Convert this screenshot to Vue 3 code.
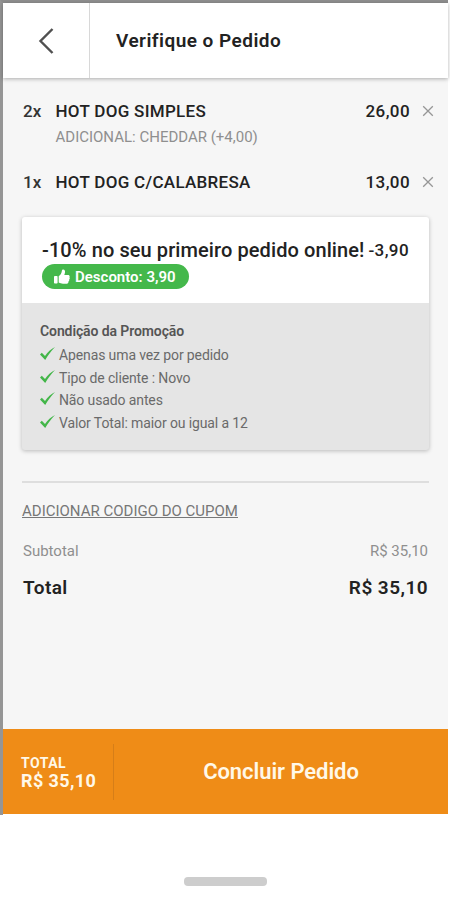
<template>
  <div class="screen">
    <div class="app">
      <header class="header">
        <button type="button" class="back" aria-label="Voltar">
          <svg width="16" height="26" viewBox="0 0 16 26">
            <path d="M14.500 1L2.500 13l12 12" fill="none" stroke="#505050" stroke-width="2.400" />
          </svg>
        </button>
        <h1>Verifique o Pedido</h1>
      </header>

      <main class="content">
        <ul class="items">
          <li v-for="item in items" :key="item.name" class="item">
            <span class="qty">{{ item.qty }}x</span>
            <div class="item-info">
              <span class="item-name">{{ item.name }}</span>
              <span v-if="item.extra" class="item-extra">{{ item.extra }}</span>
            </div>
            <span class="item-price">{{ item.price }}</span>
            <button type="button" class="remove" aria-label="Remover">
              <svg width="12" height="12" viewBox="0 0 12 12">
                <path d="M1.2 1.2l9.6 9.6M10.8 1.2L1.2 10.8" stroke="#969696" stroke-width="1.3" />
              </svg>
            </button>
          </li>
        </ul>

        <section class="promo">
          <div class="promo-top">
            <div class="promo-row">
              <span class="promo-title">-10% no seu primeiro pedido online!</span>
              <span class="promo-value">-3,90</span>
            </div>
            <span class="badge">
              <svg width="16" height="16" viewBox="0 0 16 16" fill="#fff">
                <rect x="0" y="7" width="3.6" height="7.5" rx="0.8" />
                <path
                  d="M4.7 7.2C6.3 6.1 7.5 4.5 7.8 2.2 7.9 1 8.5.5 9.3.6c1.6.2 2 1.800 1.600 3.300L10.300 6h3.800c1.300 0 2 1.300 1.300 2.300.6.7.4 1.800-.3 2.200.4.8 0 1.700-.7 2 .2 1.500-.7 2.200-2.200 2.200H9c-1.700 0-2.700-.6-4.300-1.200z"
                />
              </svg>
              <span>Desconto: 3,90</span>
            </span>
          </div>
          <div class="promo-rules">
            <h2>Condição da Promoção</h2>
            <ul>
              <li v-for="rule in rules" :key="rule">
                <svg width="15" height="14" viewBox="0 0 15 14">
                  <path d="M0 7.600L1.800 5.800 5 9C7.600 5.200 11 2 15 0 11.200 3.900 8 8.200 5.200 13z" fill="#43b649" />
                </svg>
                <span>{{ rule }}</span>
              </li>
            </ul>
          </div>
        </section>

        <hr class="divider" />

        <a class="coupon">ADICIONAR CODIGO DO CUPOM</a>

        <div class="line subtotal">
          <span>Subtotal</span>
          <span>{{ total }}</span>
        </div>
        <div class="line total">
          <span>Total</span>
          <span>{{ total }}</span>
        </div>
      </main>

      <footer class="footer">
        <div class="footer-total">
          <span class="label">TOTAL</span>
          <span class="value">{{ total }}</span>
        </div>
        <button type="button" class="finish">Concluir Pedido</button>
      </footer>
    </div>

    <div class="home-bar"><span></span></div>
  </div>
</template>

<script setup>
import { ref } from "vue";

const total = ref("R$ 35,10");

const items = ref([
  { qty: 2, name: "HOT DOG SIMPLES", extra: "ADICIONAL: CHEDDAR (+4,00)", price: "26,00" },
  { qty: 1, name: "HOT DOG C/CALABRESA", extra: "", price: "13,00" },
]);

const rules = [
  "Apenas uma vez por pedido",
  "Tipo de cliente : Novo",
  "Não usado antes",
  "Valor Total: maior ou igual a 12",
];
</script>

<style>
body {
  margin: 0;
  background: #fff;
}
</style>

<style scoped>
.screen {
  width: 450px;
  height: 900px;
  box-sizing: border-box;
  overflow: hidden;
  font-family: Roboto, sans-serif;
  color: #222;
  background: #fff;
  white-space: nowrap;
}

button {
  padding: 0;
  border: none;
  background: none;
  font-family: inherit;
}

ul {
  list-style: none;
  margin: 0;
  padding: 0;
}

svg {
  display: block;
  flex-shrink: 0;
}

.app {
  display: flex;
  flex-direction: column;
  box-sizing: border-box;
  width: 448px;
  height: 815px;
  padding-bottom: 1px;
  border-top: 3px solid #8e8e8e;
  border-left: 3px solid #959595;
  background: linear-gradient(#f6f6f6, #f6f6f6) content-box, #fff;
}

.header {
  display: flex;
  height: 75px;
  flex-shrink: 0;
  background: #fff;
  box-shadow: 0 1px 4px rgba(0, 0, 0, 0.3);
}

.back {
  display: flex;
  align-items: center;
  justify-content: center;
  width: 87px;
  box-sizing: border-box;
  border-right: 1px solid #d8d8d8;
}

.header h1 {
  margin: 0;
  padding-left: 26px;
  font-size: 19px;
  font-weight: 600;
  line-height: 75px;
  letter-spacing: 0.47px;
}

.content {
  flex: 1;
  display: flex;
  flex-direction: column;
  padding: 21px 19px 0;
}

.item {
  display: flex;
  align-items: flex-start;
  margin-right: -5px;
  font-size: 17px;
  font-weight: 500;
  line-height: 24px;
}

.item + .item {
  margin-top: 21px;
}

.qty {
  width: 33.5px;
  padding-left: 1px;
  box-sizing: border-box;
  color: #333;
}

.item-info {
  flex: 1;
  display: flex;
  flex-direction: column;
}

.item-name {
  letter-spacing: 0.3px;
}

.item-extra {
  margin-top: 2px;
  font-size: 15px;
  font-weight: 400;
  color: #8f8f8f;
}

.item-price {
  letter-spacing: 0.4px;
}

.remove {
  margin: 6px 0 0 12px;
}

.promo {
  height: 233px;
  margin-top: 23px;
  border-radius: 3px;
  overflow: hidden;
  background: #e5e5e5;
  box-shadow: 0 1px 4px rgba(0, 0, 0, 0.25);
}

.promo-top {
  height: 86px;
  box-sizing: border-box;
  padding: 21px 20px 0;
  background: #fff;
}

.promo-row {
  display: flex;
  justify-content: space-between;
  margin-bottom: 1px;
  line-height: 25px;
  font-weight: 500;
}

.promo-title {
  font-size: 20px;
  letter-spacing: 0.09px;
}

.promo-value {
  font-size: 17px;
  letter-spacing: 0.4px;
}

.badge {
  display: inline-flex;
  align-items: center;
  box-sizing: border-box;
  width: 147px;
  height: 25px;
  padding-left: 12px;
  gap: 5px;
  border-radius: 13px;
  background: #44b84b;
  color: #fff;
  font-size: 15px;
  font-weight: 600;
}

.promo-rules {
  padding: 18px 18px 0;
  color: #6a6a6a;
}

.promo-rules h2 {
  margin: 0 0 3px;
  font-size: 14px;
  font-weight: 600;
  line-height: 20px;
  letter-spacing: -0.1px;
  color: #555;
}

.promo-rules li {
  display: flex;
  align-items: center;
  gap: 4px;
  height: 22.5px;
  font-size: 14px;
  letter-spacing: -0.12px;
}

.promo-rules li svg {
  margin-bottom: 2px;
}

.divider {
  width: 100%;
  height: 2px;
  margin: 31px 0 0;
  border: none;
  background: #dedede;
}

.coupon {
  align-self: flex-start;
  margin-top: 18px;
  font-size: 15px;
  line-height: 20px;
  color: #777;
  text-decoration: underline;
}

.line {
  display: flex;
  justify-content: space-between;
  padding: 0 1px;
}

.subtotal {
  margin-top: 20px;
  font-size: 15px;
  line-height: 20px;
  color: #8f8f8f;
}

.total {
  margin-top: 14px;
  font-size: 19px;
  font-weight: 600;
  line-height: 26px;
  letter-spacing: 0.45px;
}

.footer {
  display: flex;
  align-items: center;
  flex-shrink: 0;
  height: 85px;
  background: #ef8c17;
  color: #fff8e8;
}

.footer-total {
  display: flex;
  flex-direction: column;
  justify-content: center;
  box-sizing: border-box;
  width: 111px;
  height: 56px;
  padding: 0 0 0 18px;
  border-right: 1px solid #d67e18;
  font-weight: 700;
}

.footer-total .label {
  font-size: 14px;
  line-height: 18px;
  letter-spacing: 0.5px;
}

.footer-total .value {
  font-size: 18px;
  line-height: 18px;
  letter-spacing: 0.4px;
}

.finish {
  flex: 1;
  color: inherit;
  font-size: 22px;
  font-weight: 600;
  letter-spacing: -0.05px;
}

.home-bar {
  display: flex;
  justify-content: center;
  padding-top: 62px;
}

.home-bar span {
  width: 83px;
  height: 9px;
  border-radius: 4px;
  background: #cdcdcd;
}
</style>
